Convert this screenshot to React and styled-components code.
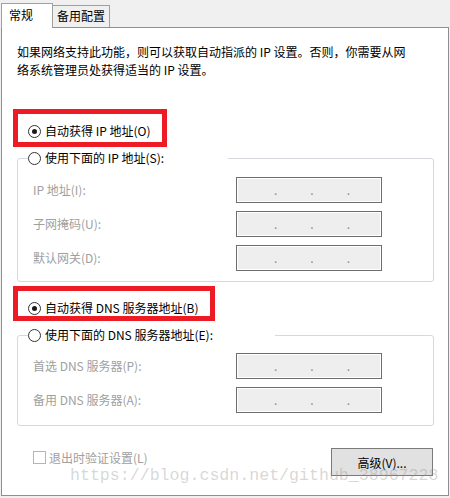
import React from 'react';
import styled, { createGlobalStyle } from 'styled-components';

const GlobalStyle = createGlobalStyle`
  html, body {
    margin: 0;
    padding: 0;
  }
  body {
    width: 450px;
    height: 498px;
    overflow: hidden;
    background: #f0f0f0;
    font-family: "Noto Sans CJK SC", "Liberation Sans", sans-serif;
    font-size: 12px;
    color: #000;
  }
`;

const Window = styled.div`
  position: relative;
  width: 450px;
  height: 498px;
  padding-top: 3px;
  box-sizing: border-box;
`;

const TabStrip = styled.div`
  position: relative;
  z-index: 1;
  display: flex;
  align-items: flex-end;
  height: 24px;
  padding-left: 1px;
`;

const Tab = styled.div`
  box-sizing: border-box;
  width: ${p => p.active ? '52px' : '58px'};
  height: ${p => p.active ? '25px' : '22px'};
  margin-bottom: ${p => p.active ? '-1px' : '0'};
  margin-left: ${p => p.active ? '0' : '-1px'};
  padding: ${p => p.active ? '3px 0 0 7px' : '2px 0 0 4px'};
  border: 1px solid #a0a0a0;
  border-bottom: none;
  background: ${p => p.active ? '#fff' : '#f0f0f0'};
  line-height: 16px;
`;

const Panel = styled.div`
  box-sizing: border-box;
  display: flex;
  flex-direction: column;
  width: 448px;
  height: 469px;
  margin-left: 1px;
  border: 1px solid #8c8f96;
  background: #fff;
`;

const Description = styled.p`
  margin: 15px 0 0 15px;
  line-height: 18px;

  span {
    display: block;
  }
`;

const RadioRow = styled.label`
  position: relative;
  display: flex;
  align-items: center;
  gap: 4px;
  height: 16px;
  line-height: 16px;
  white-space: nowrap;
`;

const TopRadio = styled(RadioRow)`
  margin: ${p => p.$top}px 0 0 26px;
`;

const RadioCircle = styled.span`
  position: relative;
  box-sizing: border-box;
  width: 13px;
  height: 13px;
  flex: none;
  border: 1px solid #333;
  border-radius: 50%;
  background: #fff;

  &::after {
    content: '';
    display: ${p => p.checked ? 'block' : 'none'};
    position: absolute;
    left: 3px;
    top: 3px;
    width: 5px;
    height: 5px;
    border-radius: 50%;
    background: #1a1a1a;
  }
`;

const Highlight = styled.span`
  position: absolute;
  left: -15px;
  top: -14px;
  width: ${p => p.$w}px;
  height: ${p => p.$h}px;
  box-sizing: border-box;
  border: 5px solid #ed1c24;
  pointer-events: none;
`;

const Group = styled.fieldset`
  width: 417px;
  box-sizing: border-box;
  margin: ${p => p.$top}px 0 0 15px;
  padding: ${p => p.$pt}px 0 ${p => p.$pb}px 15px;
  border: 1px solid #d5d9de;
  border-radius: 3px;
  min-width: 0;
`;

const Legend = styled.legend`
  width: ${p => p.$w}px;
  margin-left: -5px;
  padding: 0;
`;

const FieldGrid = styled.div`
  display: grid;
  grid-template-columns: 203px 146px;
  grid-auto-rows: 26px;
  row-gap: 8px;
  align-items: center;
`;

const FieldLabel = styled.span`
  color: #a0a0a0;
  line-height: 16px;
`;

const IpBox = styled.div`
  box-sizing: border-box;
  display: flex;
  align-items: center;
  gap: 33px;
  height: 26px;
  padding-left: 37px;
  border: 1px solid #6d6d6d;
  background: #eeeeee;
  box-shadow: inset 0 0 0 1px #fff;
  color: #8a8e99;
  line-height: 14px;
`;

const Footer = styled.div`
  display: flex;
  align-items: flex-start;
  justify-content: space-between;
  width: 400px;
  margin: 22px 0 0 31px;
`;

const CheckRow = styled.label`
  display: flex;
  align-items: center;
  gap: 3px;
  margin-top: 3px;
  color: #a0a0a0;
  line-height: 13px;
`;

const CheckBox = styled.span`
  box-sizing: border-box;
  width: 13px;
  height: 13px;
  border: 1px solid #b5b5b5;
  background: #fff;
`;

const Button = styled.button`
  box-sizing: border-box;
  width: 102px;
  height: 28px;
  border: 1px solid #7a7a7a;
  background: #e1e1e1;
  font-family: inherit;
  font-size: 12px;
  color: #000;
  padding: 0;
`;

const Watermark = styled.div`
  position: absolute;
  left: 70px;
  top: 466px;
  font-family: "Liberation Mono", monospace;
  font-size: 16.6px;
  line-height: 20px;
  color: rgba(150, 150, 150, 0.38);
  pointer-events: none;
  white-space: nowrap;
`;

const IpField = () => (
  <IpBox>
    <span>.</span>
    <span>.</span>
    <span>.</span>
  </IpBox>
);

const Radio = ({ checked, children, highlight }) => (
  <>
    <RadioCircle checked={checked} />
    <span>{children}</span>
    {highlight && <Highlight $w={highlight[0]} $h={highlight[1]} />}
  </>
);

const ipRows = ['IP 地址(I):', '子网掩码(U):', '默认网关(D):'];
const dnsRows = ['首选 DNS 服务器(P):', '备用 DNS 服务器(A):'];

export default function App() {
  return (
    <Window>
      <GlobalStyle />
      <TabStrip>
        <Tab active>常规</Tab>
        <Tab>备用配置</Tab>
      </TabStrip>
      <Panel>
        <Description>
          <span>如果网络支持此功能，则可以获取自动指派的 IP 设置。否则，你需要从网</span>
          <span>络系统管理员处获得适当的 IP 设置。</span>
        </Description>

        <TopRadio $top={44}>
          <Radio checked highlight={[154, 38]}>自动获得 IP 地址(O)</Radio>
        </TopRadio>

        <Group $top={11} $pt={11} $pb={10}>
          <Legend $w={200}>
            <RadioRow>
              <Radio>使用下面的 IP 地址(S):</Radio>
            </RadioRow>
          </Legend>
          <FieldGrid>
            {ipRows.map(label => (
              <React.Fragment key={label}>
                <FieldLabel>{label}</FieldLabel>
                <IpField />
              </React.Fragment>
            ))}
          </FieldGrid>
        </Group>

        <TopRadio $top={18}>
          <Radio checked highlight={[202, 35]}>自动获得 DNS 服务器地址(B)</Radio>
        </TopRadio>

        <Group $top={11} $pt={10} $pb={12}>
          <Legend $w={247}>
            <RadioRow>
              <Radio>使用下面的 DNS 服务器地址(E):</Radio>
            </RadioRow>
          </Legend>
          <FieldGrid>
            {dnsRows.map(label => (
              <React.Fragment key={label}>
                <FieldLabel>{label}</FieldLabel>
                <IpField />
              </React.Fragment>
            ))}
          </FieldGrid>
        </Group>

        <Footer>
          <CheckRow>
            <CheckBox />
            退出时验证设置(L)
          </CheckRow>
          <Button>高级(V)...</Button>
        </Footer>
      </Panel>
      <Watermark>https://blog.csdn.net/github_38967228</Watermark>
    </Window>
  );
}
